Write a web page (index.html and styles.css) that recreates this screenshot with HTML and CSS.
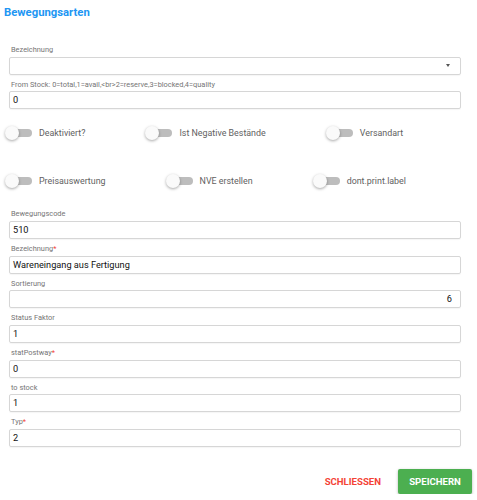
FILE: index.html
```html
<!DOCTYPE html>
<html lang="de">
<head>
<meta charset="utf-8">
<title>Bewegungsarten</title>
<link rel="stylesheet" href="styles.css">
</head>
<body>
<div class="dialog">
  <h1 class="title">Bewegungsarten</h1>
  <div class="form">
    <div class="field first">
      <label class="lbl">Bezeichnung</label>
      <div class="input select"><span></span><span class="caret"></span></div>
    </div>
    <div class="field">
      <label class="lbl">From Stock: 0=total,1=avail,&lt;br&gt;2=reserve,3=blocked,4=quality</label>
      <div class="input">0</div>
    </div>
    <div class="toggles">
      <div class="tg"><span class="sw"><span class="track"></span><span class="thumb"></span></span><span class="tl">Deaktiviert?</span></div>
      <div class="tg"><span class="sw"><span class="track"></span><span class="thumb"></span></span><span class="tl">Ist Negative Bestände</span></div>
      <div class="tg"><span class="sw"><span class="track"></span><span class="thumb"></span></span><span class="tl">Versandart</span></div>
    </div>
    <div class="toggles">
      <div class="tg"><span class="sw"><span class="track"></span><span class="thumb"></span></span><span class="tl">Preisauswertung</span></div>
      <div class="tg"><span class="sw"><span class="track"></span><span class="thumb"></span></span><span class="tl">NVE erstellen</span></div>
      <div class="tg"><span class="sw"><span class="track"></span><span class="thumb"></span></span><span class="tl">dont.print.label</span></div>
    </div>
    <div class="field after-toggles">
      <label class="lbl">Bewegungscode</label>
      <div class="input">510</div>
    </div>
    <div class="field">
      <label class="lbl">Bezeichnung<span class="req">*</span></label>
      <div class="input">Wareneingang aus Fertigung</div>
    </div>
    <div class="field">
      <label class="lbl">Sortierung</label>
      <div class="input right">6</div>
    </div>
    <div class="field">
      <label class="lbl">Status Faktor</label>
      <div class="input">1</div>
    </div>
    <div class="field">
      <label class="lbl">statPostway<span class="req">*</span></label>
      <div class="input">0</div>
    </div>
    <div class="field">
      <label class="lbl">to stock</label>
      <div class="input">1</div>
    </div>
    <div class="field">
      <label class="lbl">Typ<span class="req">*</span></label>
      <div class="input">2</div>
    </div>
  </div>
  <div class="actions">
    <button class="btn-close">SCHLIESSEN</button>
    <button class="btn-save">SPEICHERN</button>
  </div>
</div>
</body>
</html>
```
FILE: styles.css
```css
* { box-sizing: border-box; }
html, body { margin: 0; padding: 0; background: #fff; }
body { font-family: Roboto, "Noto Sans", sans-serif; color: #212121; }
.dialog { width: 477px; }
.title {
  margin: 0;
  padding: 5px 0 0 4px;
  font-size: 11.3px;
  line-height: 16px;
  font-weight: 700;
  color: #2196f3;
  height: 44px;
}
.form { padding: 0 16px 0 9px; display: flex; flex-direction: column; }
.field { display: flex; flex-direction: column; margin-top: 4px; }
.field.first { margin-top: 0; }
.field.after-toggles { margin-top: 3px; }
.lbl {
  font-size: 7.4px;
  line-height: 12.67px;
  color: #757575;
  padding-left: 2px;
  white-space: nowrap;
}
.req { color: #f44336; }
.input {
  height: 18px;
  border: 1px solid #d6d6d6;
  border-radius: 2px;
  font-size: 9.2px;
  line-height: 16px;
  padding: 0 8px 0 3px;
  color: #111;
  box-shadow: 0 1px 1px rgba(0,0,0,0.04);
}
.input.right { text-align: right; }
.select { display: flex; justify-content: space-between; align-items: center; padding-right: 10px; }
.caret {
  width: 0; height: 0;
  border-left: 2.5px solid transparent;
  border-right: 2.5px solid transparent;
  border-top: 3px solid #555;
}
.toggles { display: flex; height: 48px; align-items: center; gap: 60px; margin-left: -4px; }
.tg { display: flex; align-items: center; gap: 7px; }
.sw { position: relative; width: 27px; height: 14px; display: inline-block; }
.track {
  position: absolute; left: 6px; top: 3px; width: 21px; height: 8px;
  border-radius: 4px; background: #bdbdbd;
}
.thumb {
  position: absolute; left: 0; top: 0; width: 14px; height: 14px; border-radius: 50%;
  background: #fafafa;
  box-shadow: 0 1px 3px rgba(0,0,0,0.35);
}
.tl { font-size: 8.9px; color: #616161; white-space: nowrap; }
.actions { display: flex; justify-content: flex-end; align-items: center; gap: 17px; padding: 22px 5px 0 0; }
button { font-family: Roboto, "Noto Sans", sans-serif; border: none; cursor: pointer; }
.btn-close {
  background: transparent; color: #f44336; font-weight: 700; font-size: 9.6px; padding: 0; height: 25px;
}
.btn-save {
  background: #4caf50; color: #fff; font-weight: 700; font-size: 9.6px;
  width: 74px; height: 25px; border-radius: 2px;
  box-shadow: 0 1px 3px rgba(0,0,0,0.3);
}
```
